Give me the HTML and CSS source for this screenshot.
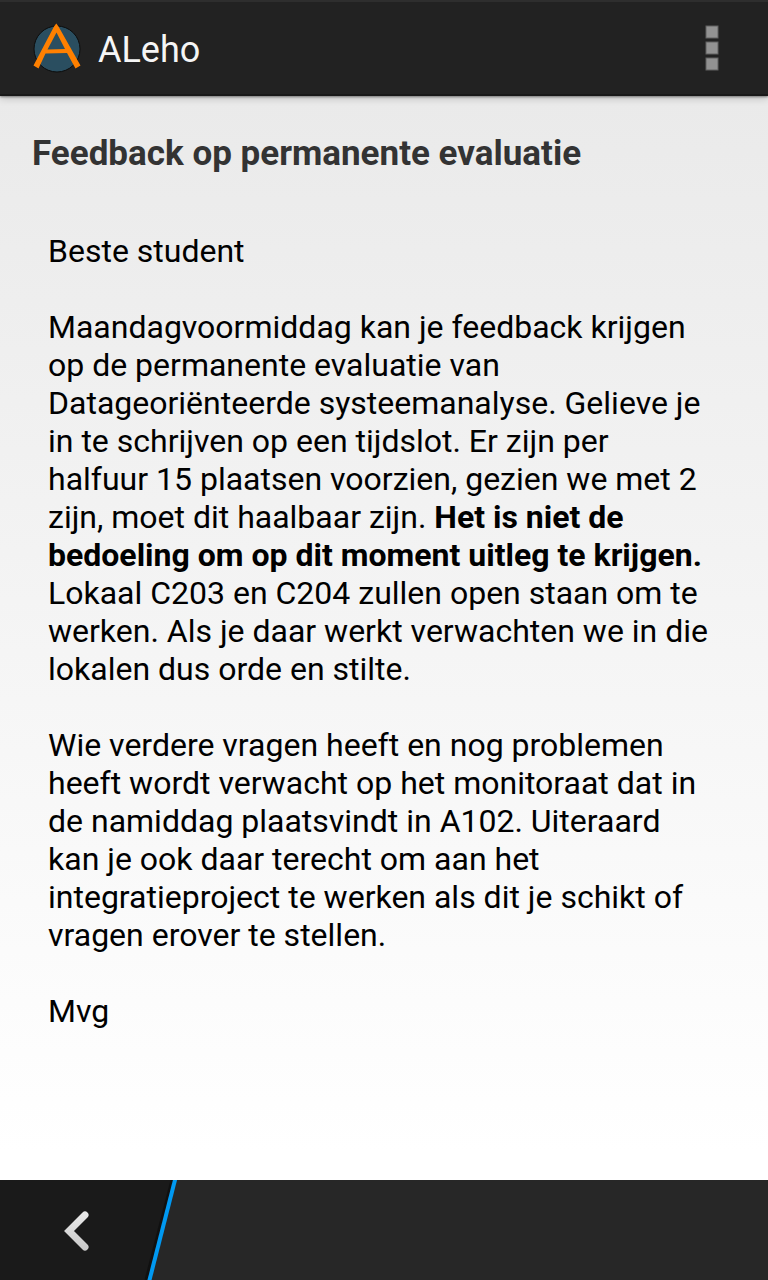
FILE: index.html
```html
<!DOCTYPE html>
<html lang="nl">
<head>
<meta charset="utf-8">
<meta name="viewport" content="width=device-width, initial-scale=1">
<title>ALeho</title>
<link rel="stylesheet" href="styles.css">
</head>
<body>
<header class="app-bar">
  <svg class="logo" viewBox="0 0 50 50" aria-hidden="true">
    <circle cx="25" cy="26" r="23" fill="#2a4e60" stroke="#0c0c0c" stroke-width="1"/>
    <path d="M24.300 .5L26.500 3.500L48.500 42.500L43.500 45.500L35 30L13.500 30.500L6.500 45.500L1.500 42.500L22 3.500zM24.500 9.500L15.500 26.500L33 26z" fill="#ff8000" fill-rule="evenodd"/>
  </svg>
  <span class="app-name">ALeho</span>
  <button class="overflow" type="button" aria-label="Menu">
    <svg viewBox="0 0 14 46" aria-hidden="true">
      <g fill="#929292" stroke="#606060">
        <rect x="1" y="1" width="12" height="12"/>
        <rect x="1" y="17" width="12" height="12"/>
        <rect x="1" y="33" width="12" height="12"/>
      </g>
    </svg>
  </button>
</header>
<main class="message">
  <h1 class="title">Feedback op permanente evaluatie</h1>
  <div class="body">
    <p>Beste student</p>
    <p>Maandagvoormiddag kan je feedback krijgen op de permanente evaluatie van Datageoriënteerde systeemanalyse. Gelieve je in te schrijven op een tijdslot. Er zijn per halfuur 15 plaatsen voorzien, gezien we met 2 zijn, moet dit haalbaar zijn. <strong>Het is niet de bedoeling om op dit moment uitleg te krijgen.</strong> Lokaal C203 en C204 zullen open staan om te werken. Als je daar werkt verwachten we in die lokalen dus orde en stilte.</p>
    <p>Wie verdere vragen heeft en nog problemen heeft wordt verwacht op het monitoraat dat in de namiddag plaatsvindt in A102. Uiteraard kan je ook daar terecht om aan het integratieproject te werken als dit je schikt of vragen erover te stellen.</p>
    <p>Mvg</p>
  </div>
</main>
<footer class="nav-bar">
  <button class="back" type="button" aria-label="Terug">
    <svg viewBox="0 0 180 100" aria-hidden="true">
      <defs>
        <linearGradient id="arrow" x1="0" y1="0" x2="0" y2="1">
          <stop offset="0" stop-color="#e8e8e8"/>
          <stop offset="1" stop-color="#cccccc"/>
        </linearGradient>
      </defs>
      <path d="M0 0H175L149 100H0z" fill="#1a1a1a"/>
      <path d="M172 0L146 100" stroke="#101010" stroke-width="3"/>
      <path d="M175.500 -2L149 102" stroke="#0099f2" stroke-width="4"/>
      <path d="M85 35L69 51L85 67" fill="none" stroke="url(#arrow)" stroke-width="7" stroke-linecap="round"/>
    </svg>
  </button>
</footer>
</body>
</html>
```

FILE: styles.css
```css
* { box-sizing: border-box; }
body {
  margin: 0;
  min-height: 100vh;
  display: flex;
  flex-direction: column;
  font-family: Roboto, "Liberation Sans", sans-serif;
  color: #000;
  background: linear-gradient(#e8e8e8, #fff 90%);
}
button { padding: 0; border: 0; background: none; cursor: pointer; }
svg { display: block; }
.app-bar {
  display: flex;
  align-items: center;
  gap: 16px;
  height: 96px;
  padding: 0 48px 0 32px;
  background: #222;
  border-top: 2px solid #2e2e2e;
  border-bottom: 2px solid #191919;
  box-shadow: 0 1px 2px rgba(0, 0, 0, 0.4), 0 2px 8px rgba(0, 0, 0, 0.2);
}
.logo { width: 50px; height: 50px; }
.app-name {
  padding-top: 4px;
  color: #f5f5f5;
  font-size: 36px;
  line-height: 44px;
}
.overflow { margin-left: auto; }
.overflow svg { width: 16px; height: 46px; }
.message { flex: 1; padding: 32px; }
.title { margin: 0; font-size: 35px; line-height: 52px; color: #333; }
.body { padding: 52px 24px 0 16px; font-size: 32px; line-height: 38px; }
.body p { margin: 0 0 38px; }
.nav-bar { height: 100px; background: #272727; }
.back svg { width: 180px; height: 100px; }
```
